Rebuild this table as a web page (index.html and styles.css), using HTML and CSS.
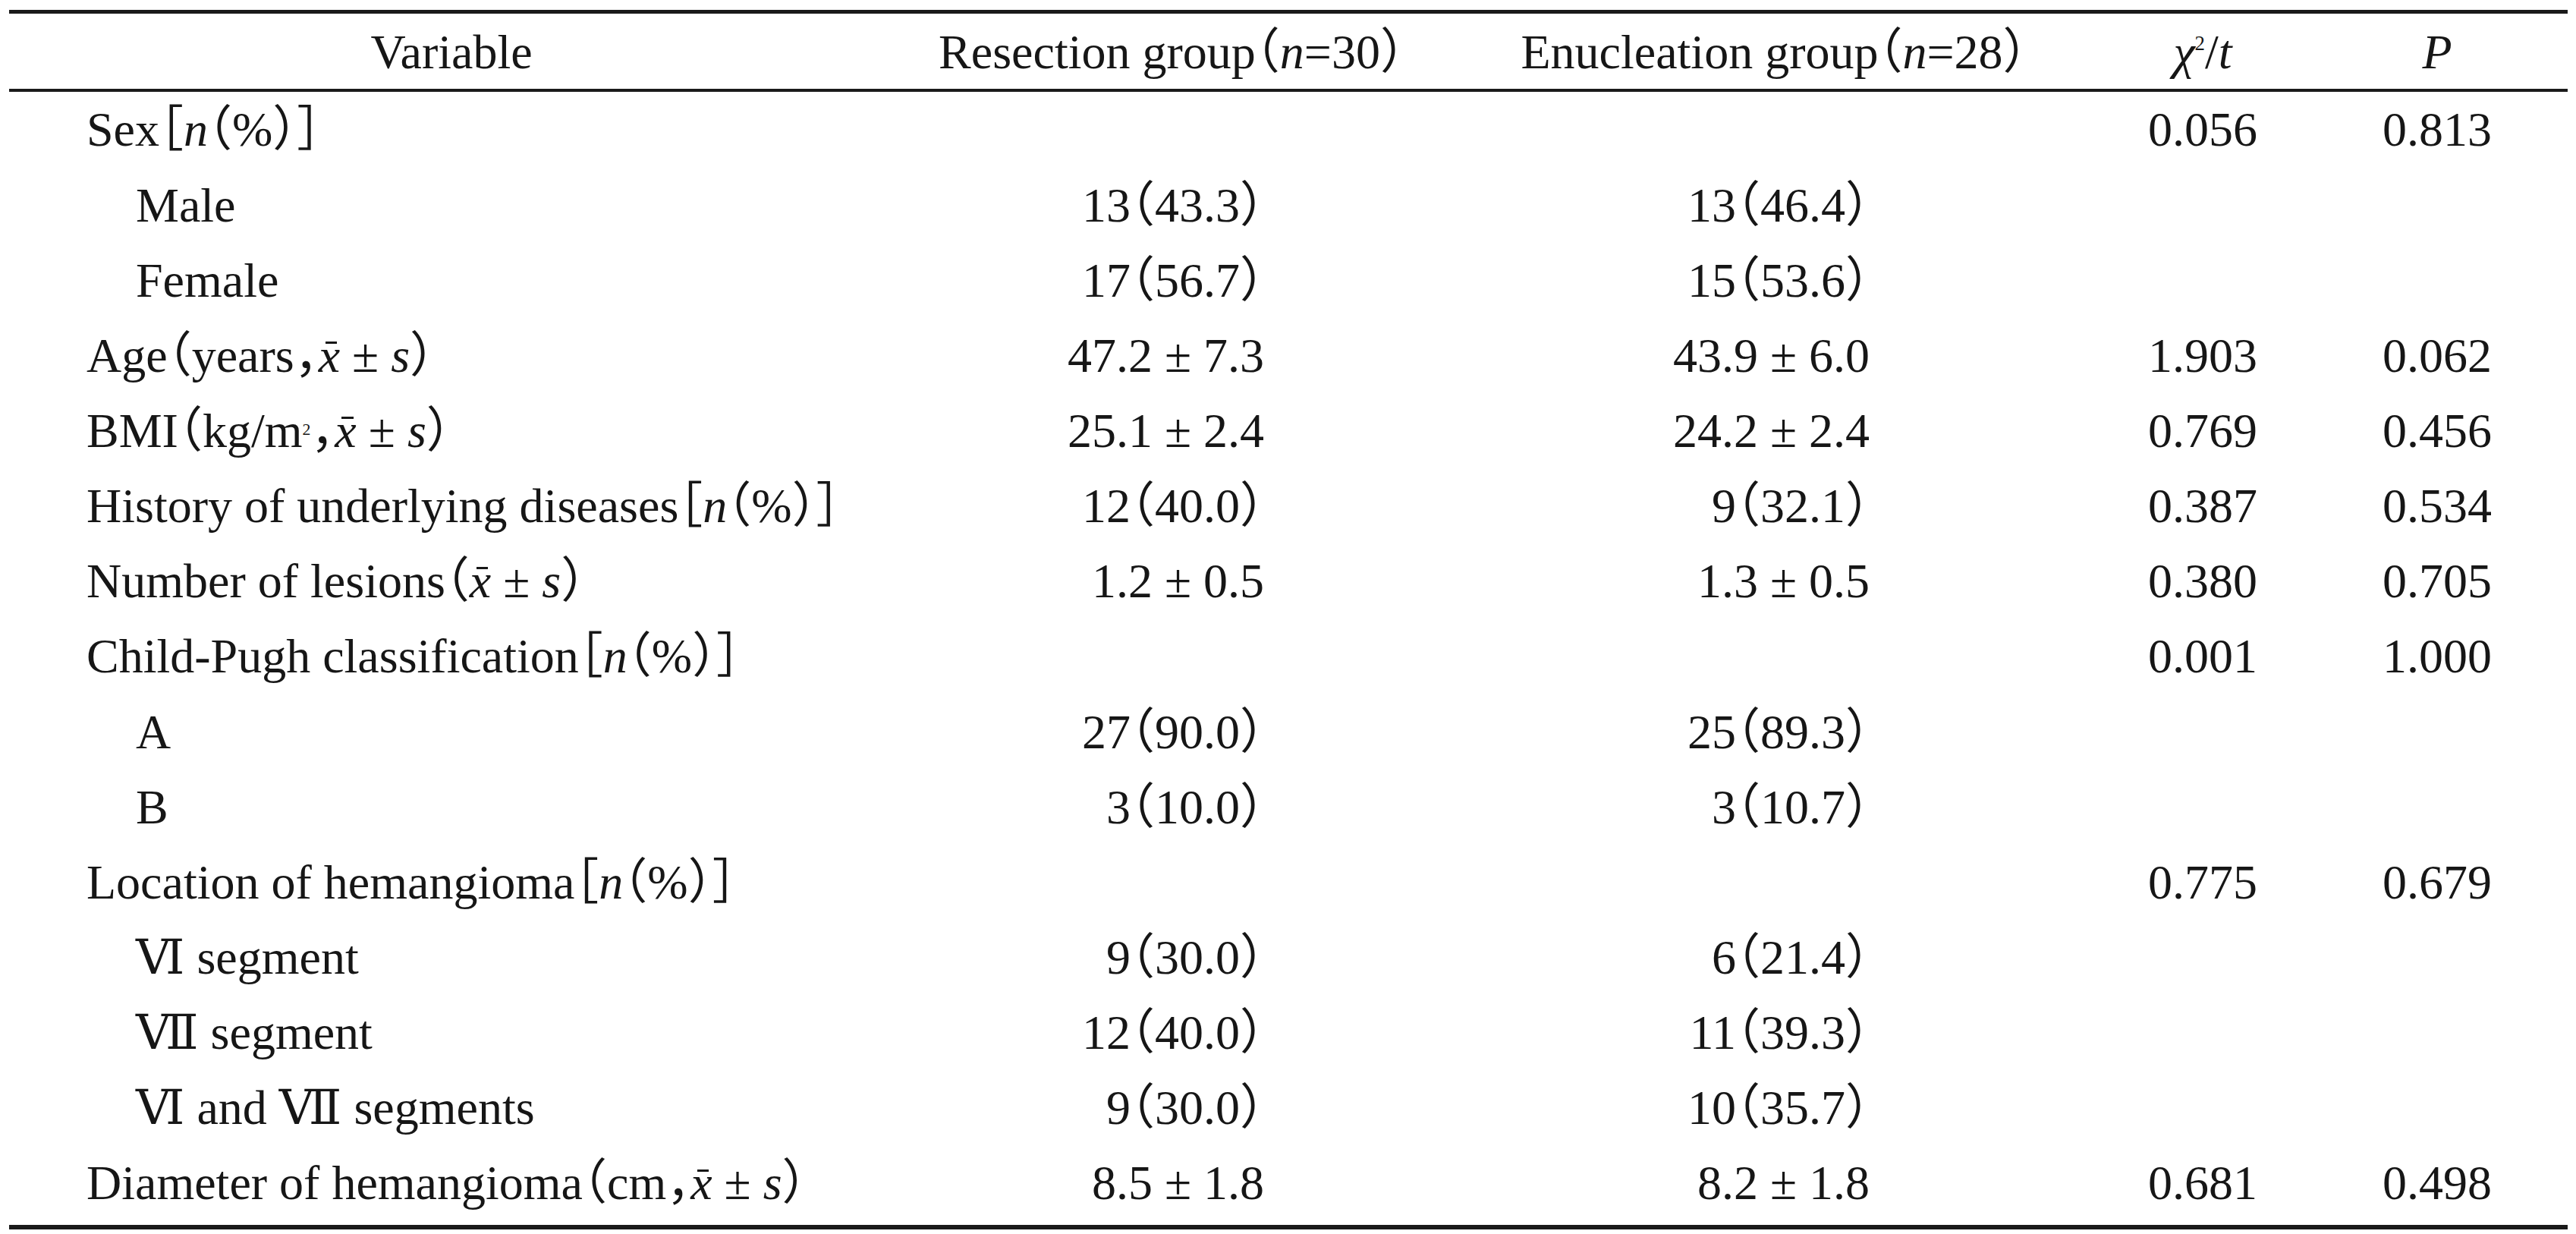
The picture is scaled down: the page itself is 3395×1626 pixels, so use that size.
FILE: index.html
```html
<!DOCTYPE html>
<html lang="en">
<head>
<meta charset="utf-8">
<title>Baseline characteristics</title>
<link rel="stylesheet" href="styles.css">
</head>
<body>
<div class="table">
  <div class="row head">
    <div class="cell">Variable</div>
    <div class="cell">Resection group<span class="fw">（</span><i>n</i>=30<span class="fw">）</span></div>
    <div class="cell">Enucleation group<span class="fw">（</span><i>n</i>=28<span class="fw">）</span></div>
    <div class="cell"><i>χ</i><span class="sup chi">2</span>/<i>t</i></div>
    <div class="cell"><i>P</i></div>
  </div>
  <div class="body">
    <div class="row">
      <div class="cell c1">Sex<span class="fw">［</span><i>n</i><span class="fw">（</span>%<span class="fw">）］</span></div>
      <div class="cell c2"></div>
      <div class="cell c3"></div>
      <div class="cell c4">0.056</div>
      <div class="cell c5">0.813</div>
    </div>
    <div class="row">
      <div class="cell c1 sub">Male</div>
      <div class="cell c2">13<span class="fw">（</span>43.3<span class="fw">）</span></div>
      <div class="cell c3">13<span class="fw">（</span>46.4<span class="fw">）</span></div>
      <div class="cell c4"></div>
      <div class="cell c5"></div>
    </div>
    <div class="row">
      <div class="cell c1 sub">Female</div>
      <div class="cell c2">17<span class="fw">（</span>56.7<span class="fw">）</span></div>
      <div class="cell c3">15<span class="fw">（</span>53.6<span class="fw">）</span></div>
      <div class="cell c4"></div>
      <div class="cell c5"></div>
    </div>
    <div class="row">
      <div class="cell c1">Age<span class="fw">（</span>years<span class="fw">，</span><span class="xb">x</span> ± <i>s</i><span class="fw">）</span></div>
      <div class="cell c2">47.2 ± 7.3</div>
      <div class="cell c3">43.9 ± 6.0</div>
      <div class="cell c4">1.903</div>
      <div class="cell c5">0.062</div>
    </div>
    <div class="row">
      <div class="cell c1">BMI<span class="fw">（</span>kg/m<span class="sup">2</span><span class="fw">，</span><span class="xb">x</span> ± <i>s</i><span class="fw">）</span></div>
      <div class="cell c2">25.1 ± 2.4</div>
      <div class="cell c3">24.2 ± 2.4</div>
      <div class="cell c4">0.769</div>
      <div class="cell c5">0.456</div>
    </div>
    <div class="row">
      <div class="cell c1">History of underlying diseases<span class="fw">［</span><i>n</i><span class="fw">（</span>%<span class="fw">）］</span></div>
      <div class="cell c2">12<span class="fw">（</span>40.0<span class="fw">）</span></div>
      <div class="cell c3">9<span class="fw">（</span>32.1<span class="fw">）</span></div>
      <div class="cell c4">0.387</div>
      <div class="cell c5">0.534</div>
    </div>
    <div class="row">
      <div class="cell c1">Number of lesions<span class="fw">（</span><span class="xb">x</span> ± <i>s</i><span class="fw">）</span></div>
      <div class="cell c2">1.2 ± 0.5</div>
      <div class="cell c3">1.3 ± 0.5</div>
      <div class="cell c4">0.380</div>
      <div class="cell c5">0.705</div>
    </div>
    <div class="row">
      <div class="cell c1">Child-Pugh classification<span class="fw">［</span><i>n</i><span class="fw">（</span>%<span class="fw">）］</span></div>
      <div class="cell c2"></div>
      <div class="cell c3"></div>
      <div class="cell c4">0.001</div>
      <div class="cell c5">1.000</div>
    </div>
    <div class="row">
      <div class="cell c1 sub">A</div>
      <div class="cell c2">27<span class="fw">（</span>90.0<span class="fw">）</span></div>
      <div class="cell c3">25<span class="fw">（</span>89.3<span class="fw">）</span></div>
      <div class="cell c4"></div>
      <div class="cell c5"></div>
    </div>
    <div class="row">
      <div class="cell c1 sub">B</div>
      <div class="cell c2">3<span class="fw">（</span>10.0<span class="fw">）</span></div>
      <div class="cell c3">3<span class="fw">（</span>10.7<span class="fw">）</span></div>
      <div class="cell c4"></div>
      <div class="cell c5"></div>
    </div>
    <div class="row">
      <div class="cell c1">Location of hemangioma<span class="fw">［</span><i>n</i><span class="fw">（</span>%<span class="fw">）］</span></div>
      <div class="cell c2"></div>
      <div class="cell c3"></div>
      <div class="cell c4">0.775</div>
      <div class="cell c5">0.679</div>
    </div>
    <div class="row">
      <div class="cell c1 sub"><span class="rn">Ⅵ</span> segment</div>
      <div class="cell c2">9<span class="fw">（</span>30.0<span class="fw">）</span></div>
      <div class="cell c3">6<span class="fw">（</span>21.4<span class="fw">）</span></div>
      <div class="cell c4"></div>
      <div class="cell c5"></div>
    </div>
    <div class="row">
      <div class="cell c1 sub"><span class="rn">Ⅶ</span> segment</div>
      <div class="cell c2">12<span class="fw">（</span>40.0<span class="fw">）</span></div>
      <div class="cell c3">11<span class="fw">（</span>39.3<span class="fw">）</span></div>
      <div class="cell c4"></div>
      <div class="cell c5"></div>
    </div>
    <div class="row">
      <div class="cell c1 sub"><span class="rn">Ⅵ</span> and <span class="rn">Ⅶ</span> segments</div>
      <div class="cell c2">9<span class="fw">（</span>30.0<span class="fw">）</span></div>
      <div class="cell c3">10<span class="fw">（</span>35.7<span class="fw">）</span></div>
      <div class="cell c4"></div>
      <div class="cell c5"></div>
    </div>
    <div class="row">
      <div class="cell c1">Diameter of hemangioma<span class="fw">（</span>cm<span class="fw">，</span><span class="xb">x</span> ± <i>s</i><span class="fw">）</span></div>
      <div class="cell c2">8.5 ± 1.8</div>
      <div class="cell c3">8.2 ± 1.8</div>
      <div class="cell c4">0.681</div>
      <div class="cell c5">0.498</div>
    </div>
  </div>
</div>
</body>
</html>
```

FILE: styles.css
```css
html, body {
  margin: 0;
  padding: 0;
  background: #ffffff;
}

.table {
  margin: 13px 0 0 12px;
  width: 3372px;
  border-top: 5px solid #1a1a1a;
  border-bottom: 6px solid #1a1a1a;
  font-family: "Liberation Serif", "DejaVu Serif", "Noto Sans CJK SC", serif;
  font-size: 64px;
  color: #161616;
  font-feature-settings: "halt" 1;
  text-spacing-trim: space-all;
}

.row {
  display: grid;
  grid-template-columns: 1166px 732px 856px 274px 344px;
  align-items: center;
  box-sizing: border-box;
  height: 99.15px;
  padding-top: 2px;
}

.head {
  height: 95px;
  padding-top: 4px;
  border-bottom: 4px solid #1a1a1a;
  box-sizing: content-box;
}

.head .cell {
  text-align: center;
}

.body {
  padding-bottom: 6px;
}

.cell {
  line-height: 1.1;
  white-space: nowrap;
}

.c1 {
  padding-left: 102px;
}

.c1.sub {
  padding-left: 167px;
}

.c2 {
  text-align: right;
  padding-right: 244px;
}

.c3 {
  text-align: right;
  padding-right: 302px;
}

.c4,
.c5 {
  text-align: center;
}

.fw {
  line-height: 0;
}

.rn {
  line-height: 0;
}

.sup {
  font-size: 0.34em;
  line-height: 0;
  vertical-align: 0.75em;
}

.sup.chi {
  font-size: 0.42em;
  vertical-align: 0.9em;
}

.xb {
  font-style: italic;
  position: relative;
}

.xb::after {
  content: "";
  position: absolute;
  left: 0.14em;
  top: 0.27em;
  width: 0.24em;
  height: 3px;
  background: #161616;
}
```
